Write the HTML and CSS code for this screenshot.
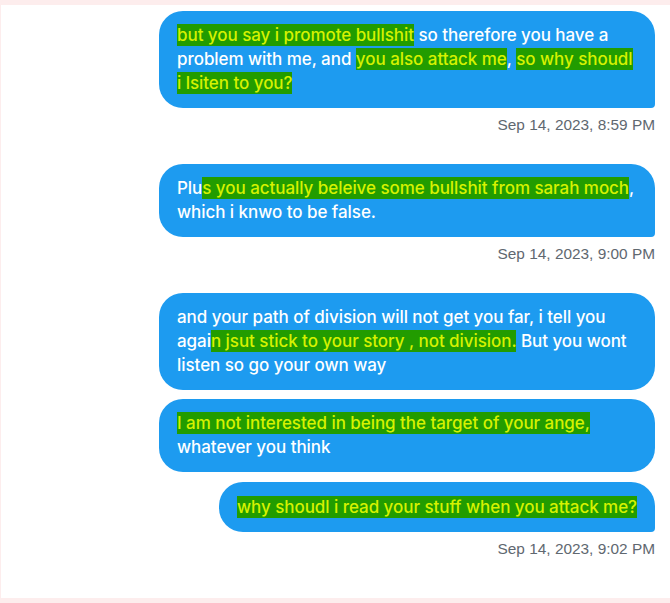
FILE: index.html
```html
<!DOCTYPE html>
<html lang="en">
<head>
<meta charset="utf-8">
<title>Messages</title>
<link rel="stylesheet" href="styles.css">
</head>
<body>
<div class="page">
  <div class="thread">
    <div class="group">
      <div class="bubble full last">
        <span class="hl">but you say i promote bullshit</span> so therefore you have a<br>problem with me, and <span class="hl">you also attack me</span>, <span class="hl">so why shoudl<br>i lsiten to you?</span>
      </div>
      <div class="time">Sep 14, 2023, 8:59 PM</div>
    </div>

    <div class="group">
      <div class="bubble full last">
        Plu<span class="hl">s you actually beleive some bullshit from sarah moch</span>,<br>which i knwo to be false.
      </div>
      <div class="time">Sep 14, 2023, 9:00 PM</div>
    </div>

    <div class="group">
      <div class="bubble full">
        and your path of division will not get you far, i tell you<br>agai<span class="hl">n jsut stick to your story , not division.</span> But you wont<br>listen so go your own way
      </div>
      <div class="bubble full">
        <span class="hl">I am not interested in being the target of your ange,</span><br>whatever you think
      </div>
      <div class="bubble last single">
        <span class="hl">why shoudl i read your stuff when you attack me?</span>
      </div>
      <div class="time">Sep 14, 2023, 9:02 PM</div>
    </div>
  </div>
</div>
</body>
</html>
```

FILE: styles.css
```css
html, body {
  margin: 0;
  padding: 0;
}

body {
  background: #fdeded;
  width: 670px;
  height: 603px;
  overflow: hidden;
}

.page {
  margin: 5px 0 0 1px;
  height: 593px;
  background: #ffffff;
  padding: 6px 15px 0 0;
  box-sizing: border-box;
}

.thread {
  display: flex;
  flex-direction: column;
  align-items: flex-end;
}

.group {
  display: flex;
  flex-direction: column;
  align-items: flex-end;
  gap: 9px;
  margin-bottom: 29px;
}

.bubble {
  background: #1d9bf0;
  color: #ffffff;
  font-family: Inter, Roboto, "Liberation Sans", sans-serif;
  font-size: 17px;
  font-weight: 500;
  line-height: 24px;
  padding: 12px 18px 13px;
  border-radius: 24px;
  box-sizing: border-box;
  max-width: 496px;
  letter-spacing: -0.05px;
  white-space: nowrap;
}

.bubble.full {
  width: 496px;
}

.bubble.last {
  border-bottom-right-radius: 4px;
}

.bubble.single {
  margin-top: 1px;
  padding-top: 13px;
}

.hl {
  background: #229c00;
  color: #d6f200;
  padding: 1px 0;
}

.time {
  font-family: "Liberation Sans", Arial, sans-serif;
  font-size: 15.4px;
  line-height: 20px;
  color: #606870;
  margin-top: -2px;
}
```
